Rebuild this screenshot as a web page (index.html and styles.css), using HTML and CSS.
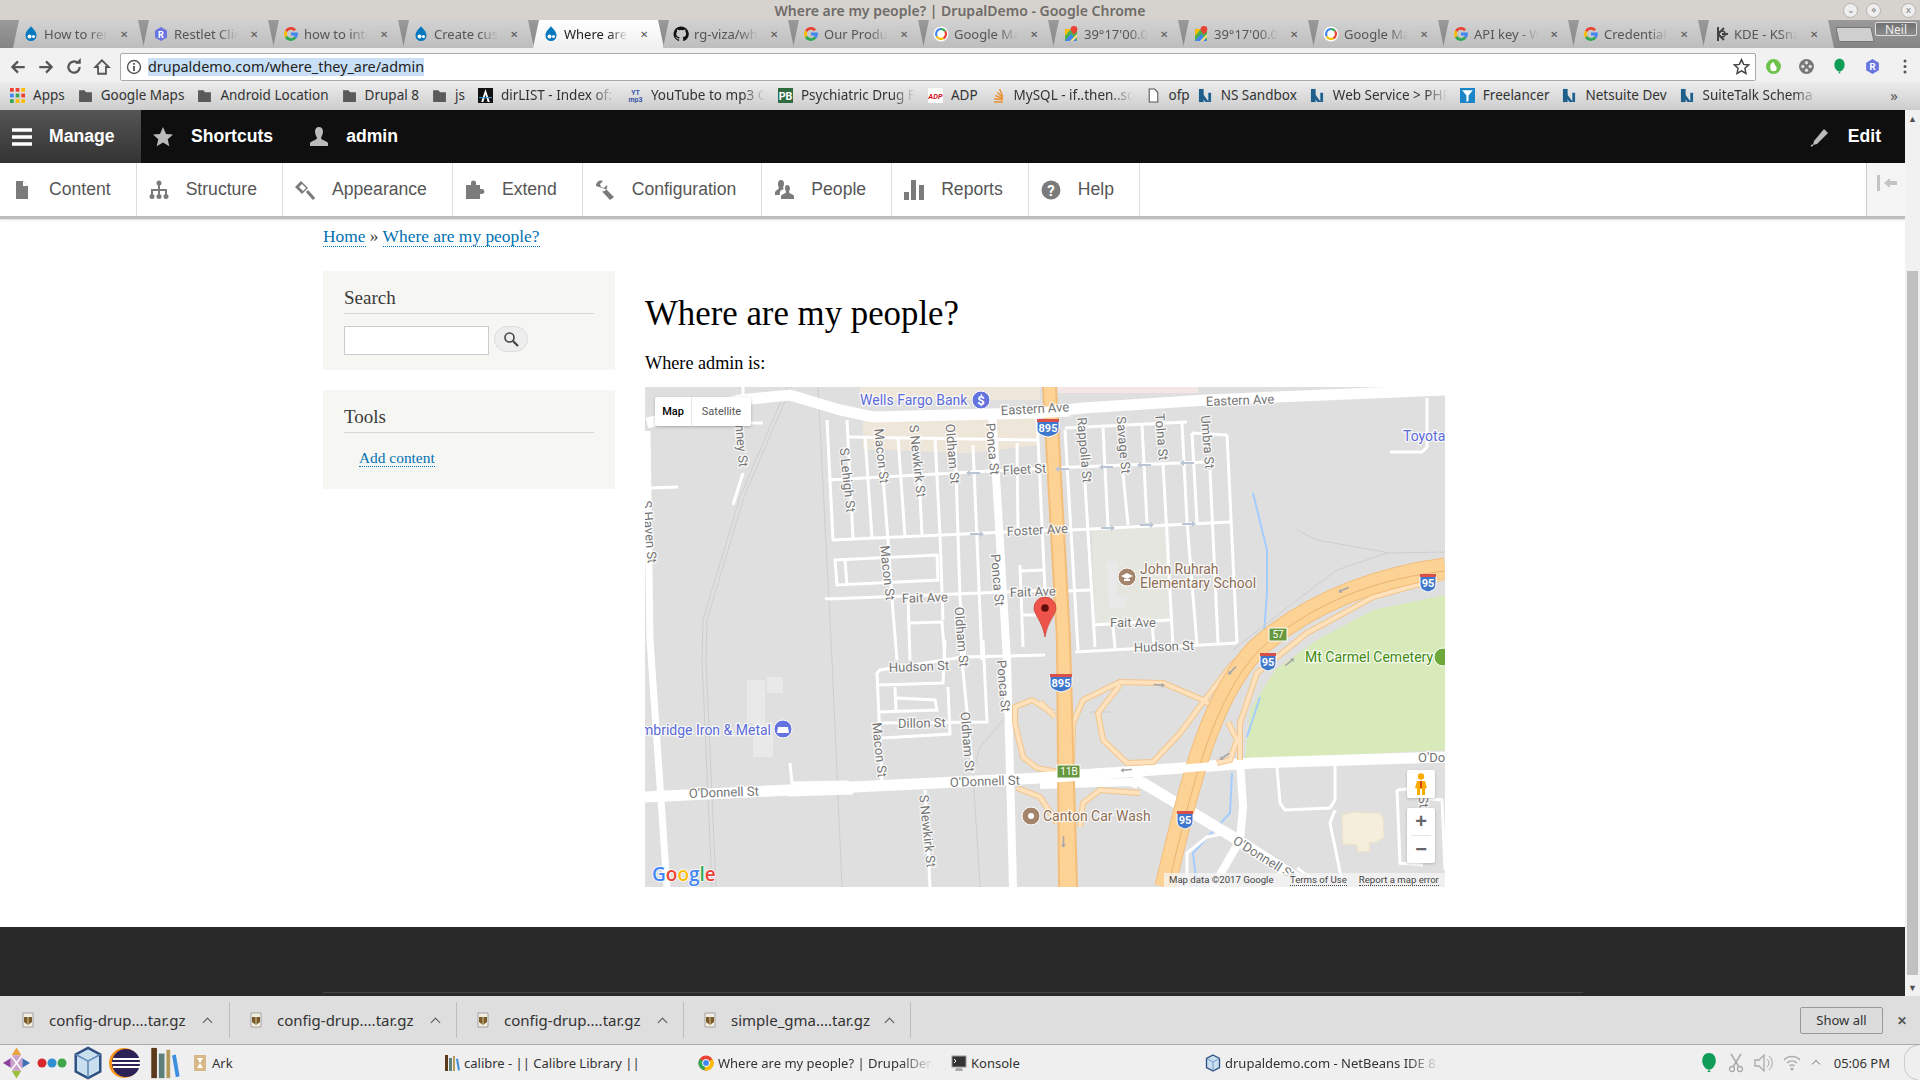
FILE: index.html
```html
<!DOCTYPE html>
<html lang="en">
<head>
    <meta charset="UTF-8">
    <title>Where are my people? | DrupalDemo</title>
    <link rel="stylesheet" href="styles.css">
</head>
<body>
<svg class="defs" width="0" height="0">
    <symbol id="i-drop" viewBox="0 0 16 16"><path d="M8 0c1 2.500 5.500 4.500 5.500 9.500a5.500 5.500 0 0 1-11 0C2.500 4.500 7 2.500 8 0z" fill="#0678be"/><circle cx="6.500" cy="10.500" r="2" fill="#fff"/><circle cx="10.500" cy="10.500" r="1.500" fill="#fff"/></symbol>
    <symbol id="i-r" viewBox="0 0 16 16"><path d="M8 1l6 3.500v7L8 15l-6-3.500v-7z" fill="#6a76e0"/><text x="8" y="11.500" class="ico-letter">R</text></symbol>
    <symbol id="i-g" viewBox="0 0 16 16"><g fill="none" stroke-width="2.800"><path d="M3.200 5.200A5.500 5.500 0 0 1 12 4.200" stroke="#ea4335"/><path d="M3.200 5.200a5.500 5.500 0 0 0 0 5.600" stroke="#fbbc05"/><path d="M3.200 10.800a5.500 5.500 0 0 0 9.100.6" stroke="#34a853"/><path d="M12.300 11.400A5.500 5.500 0 0 0 13.500 8H8" stroke="#4285f4"/></g></symbol>
    <symbol id="i-gh" viewBox="0 0 16 16"><path d="M8 .5a7.500 7.500 0 0 0-2.400 14.600c.4.100.5-.2.500-.4v-1.400c-2.100.5-2.500-.9-2.500-.9-.4-.9-.9-1.100-.9-1.100-.7-.5 0-.5 0-.5.800.1 1.200.8 1.200.8.700 1.200 1.800.8 2.300.6.100-.5.300-.8.500-1-1.700-.2-3.400-.8-3.400-3.700 0-.8.300-1.500.8-2-.1-.2-.3-1 .1-2 0 0 .6-.2 2.100.8a7 7 0 0 1 3.800 0c1.500-1 2.100-.8 2.100-.8.400 1 .2 1.800.1 2 .5.500.8 1.200.8 2 0 2.900-1.700 3.500-3.400 3.700.3.200.5.700.5 1.400v2.100c0 .2.100.5.500.4A7.500 7.500 0 0 0 8 .5z" fill="#111"/></symbol>
    <symbol id="i-gm" viewBox="0 0 16 16"><circle cx="8" cy="8" r="7.500" fill="#fff"/><path d="M8 3a5 5 0 0 0-4.300 7.500" fill="none" stroke="#4285f4" stroke-width="2.200"/><path d="M3.700 10.500A5 5 0 0 0 10.500 12.300" fill="none" stroke="#fbbc05" stroke-width="2.200"/><path d="M10.500 12.300A5 5 0 0 0 12 5" fill="none" stroke="#ea4335" stroke-width="2.200"/><path d="M12 5A5 5 0 0 0 8 3" fill="none" stroke="#34a853" stroke-width="2.200"/></symbol>
    <symbol id="i-maps" viewBox="0 0 16 16"><path d="M2 3h12v12H2z" fill="#4caf50"/><path d="M2 15L8 8l6 7z" fill="#4285f4"/><path d="M2 3h6L2 10z" fill="#fbbc05"/><path d="M7 15l7-7v3l-4 4z" fill="#ffe082"/><path d="M11 0a3.300 3.300 0 0 1 3.300 3.300C14.300 5.800 11 8.500 11 8.500S7.700 5.800 7.700 3.300A3.300 3.300 0 0 1 11 0z" fill="#ea4335"/></symbol>
    <symbol id="i-kde" viewBox="0 0 16 16"><path d="M5 1v14M5 8l6-6M5 8l6 6M9 8h6" stroke="#444" stroke-width="2" fill="none"/><circle cx="9" cy="8" r="3" fill="none" stroke="#444" stroke-width="1.500"/></symbol>
    <symbol id="i-folder" viewBox="0 0 14 14"><path d="M1 2h5l1.500 2H13v9H1z" fill="#5a5a5a"/></symbol>
    <symbol id="i-ns" viewBox="0 0 16 16"><path d="M1 1h5v14H1z" fill="#1e5f8c"/><path d="M10 1h5v14h-5z" fill="#dfe6ec"/><path d="M2 2l9 12V5h3v10H8L2 7z" fill="#1e5f8c"/></symbol>
    <symbol id="i-tgz" viewBox="0 0 16 16"><path d="M3 1h10v14H3z" fill="#f2ede2" stroke="#888" stroke-width=".700"/><path d="M4 5h8v5l-4 3-4-3z" fill="#7a5a2a"/><path d="M8 5v8" stroke="#d8c89a" stroke-width="1"/></symbol>
    <symbol id="i-balloon" viewBox="0 0 16 20"><path d="M8 1c3.800 0 6 3 6 7 0 4-3 8-6 8s-6-4-6-8c0-4 2.200-7 6-7z" fill="#0f9d58"/><path d="M8 16l-1.500 2h3z" fill="#0f9d58"/></symbol>
    <symbol id="i-cube" viewBox="0 0 16 18"><path d="M8 1l6.500 3.500v9L8 17l-6.500-3.500v-9z" fill="#c9dff0" stroke="#2c4f80" stroke-width="1.300"/><path d="M8 8l6.500-3.500M8 8v9M8 8L1.500 4.500" stroke="#5f88b5" stroke-width=".800" fill="none"/></symbol>
    <symbol id="i-books" viewBox="0 0 16 18"><path d="M1 1h3v16H1z" fill="#5a3a1a"/><path d="M5 4h3v13H5z" fill="#5f7f7a"/><path d="M9 2h2v15H9z" fill="#b49a5a"/><path d="M12 5l2-.500L16 16l-2 .500z" fill="#3f8fe0"/></symbol>
    <symbol id="i-arrow" viewBox="0 0 14 6"><path d="M0 3l4-3v2h10v2H4v2z"/></symbol>
</svg>

<div class="screen">
    <div class="titlebar">
        <span class="title-text">Where are my people? | DrupalDemo - Google Chrome</span>
        <div class="win-btns">
            <span class="win-btn">&#8964;</span>
            <span class="win-btn">&#8900;</span>
            <span class="win-btn win-close">x</span>
        </div>
    </div>

    <div class="tabstrip">
        <div class="tab"><svg class="fav"><use href="#i-drop"/></svg><span class="tab-title">How to rename</span><span class="tab-x">&#10005;</span></div>
        <div class="tab"><svg class="fav"><use href="#i-r"/></svg><span class="tab-title">Restlet Client</span><span class="tab-x">&#10005;</span></div>
        <div class="tab"><svg class="fav"><use href="#i-g"/></svg><span class="tab-title">how to integrate</span><span class="tab-x">&#10005;</span></div>
        <div class="tab"><svg class="fav"><use href="#i-drop"/></svg><span class="tab-title">Create custom</span><span class="tab-x">&#10005;</span></div>
        <div class="tab tab-active"><svg class="fav"><use href="#i-drop"/></svg><span class="tab-title">Where are my</span><span class="tab-x">&#10005;</span></div>
        <div class="tab"><svg class="fav"><use href="#i-gh"/></svg><span class="tab-title">rg-viza/where</span><span class="tab-x">&#10005;</span></div>
        <div class="tab"><svg class="fav"><use href="#i-g"/></svg><span class="tab-title">Our Products</span><span class="tab-x">&#10005;</span></div>
        <div class="tab"><svg class="fav"><use href="#i-gm"/></svg><span class="tab-title">Google Maps</span><span class="tab-x">&#10005;</span></div>
        <div class="tab"><svg class="fav"><use href="#i-maps"/></svg><span class="tab-title">39°17'00.0"N</span><span class="tab-x">&#10005;</span></div>
        <div class="tab"><svg class="fav"><use href="#i-maps"/></svg><span class="tab-title">39°17'00.0"N</span><span class="tab-x">&#10005;</span></div>
        <div class="tab"><svg class="fav"><use href="#i-gm"/></svg><span class="tab-title">Google Maps</span><span class="tab-x">&#10005;</span></div>
        <div class="tab"><svg class="fav"><use href="#i-g"/></svg><span class="tab-title">API key - Web</span><span class="tab-x">&#10005;</span></div>
        <div class="tab"><svg class="fav"><use href="#i-g"/></svg><span class="tab-title">Credentials</span><span class="tab-x">&#10005;</span></div>
        <div class="tab"><svg class="fav"><use href="#i-kde"/></svg><span class="tab-title">KDE - KSnap</span><span class="tab-x">&#10005;</span></div>
        <div class="newtab"></div>
        <div class="profile">Neil</div>
    </div>

    <div class="toolbar">
        <div class="nav-btns">
            <svg class="nav-ico" viewBox="0 0 16 16"><path d="M14 8H3M8 3L3 8l5 5" fill="none" stroke="#555" stroke-width="2"/></svg>
            <svg class="nav-ico" viewBox="0 0 16 16"><path d="M2 8h11M8 3l5 5-5 5" fill="none" stroke="#555" stroke-width="2"/></svg>
            <svg class="nav-ico" viewBox="0 0 16 16"><path d="M13 8a5 5 0 1 1-1.500-3.500" fill="none" stroke="#555" stroke-width="2"/><path d="M9 5h5V0z" fill="#555"/></svg>
            <svg class="nav-ico" viewBox="0 0 16 16"><path d="M8 2L2 8h2.500v6h7V8H14z" fill="none" stroke="#555" stroke-width="1.600"/></svg>
        </div>
        <div class="omnibox">
            <svg class="info-ico" viewBox="0 0 16 16"><circle cx="8" cy="8" r="6.500" fill="none" stroke="#555" stroke-width="1.400"/><path d="M8 7v5M8 4v1.800" stroke="#555" stroke-width="1.800"/></svg>
            <span class="url">drupaldemo.com/where_they_are/admin</span>
            <svg class="star-ico" viewBox="0 0 16 16"><path d="M8 1.500l2 4.500 4.800.5-3.600 3.200 1 4.800L8 12l-4.200 2.500 1-4.800L1.200 6.500 6 6z" fill="none" stroke="#444" stroke-width="1.400"/></svg>
        </div>
        <div class="ext-btns">
            <svg class="ext" viewBox="0 0 16 16"><circle cx="8" cy="8" r="7" fill="#6cc24a"/><path d="M8 3.500c-3 2-3.500 4-3 6a3 3 0 0 0 6 0c0-2-2-2.500-3-6z" fill="#fff"/></svg>
            <svg class="ext" viewBox="0 0 16 16"><circle cx="8" cy="8" r="7" fill="#777"/><circle cx="8" cy="4.500" r="1.600" fill="#ddd"/><circle cx="8" cy="11.500" r="1.600" fill="#ddd"/><circle cx="4.500" cy="8" r="1.600" fill="#ddd"/><circle cx="11.500" cy="8" r="1.600" fill="#ddd"/></svg>
            <svg class="ext" viewBox="0 0 16 20"><use href="#i-balloon"/></svg>
            <svg class="ext"><use href="#i-r"/></svg>
            <svg class="ext ext-dots" viewBox="0 0 4 16"><circle cx="2" cy="2.500" r="1.500" fill="#555"/><circle cx="2" cy="8" r="1.500" fill="#555"/><circle cx="2" cy="13.500" r="1.500" fill="#555"/></svg>
        </div>
    </div>

    <div class="bookmarks">
        <div class="bm"><svg class="bm-ico" viewBox="0 0 12 12"><rect x="0" y="0" width="3" height="3" fill="#ea4335"/><rect x="4.500" y="0" width="3" height="3" fill="#ea4335"/><rect x="9" y="0" width="3" height="3" fill="#fbbc05"/><rect x="0" y="4.500" width="3" height="3" fill="#4285f4"/><rect x="4.500" y="4.500" width="3" height="3" fill="#34a853"/><rect x="9" y="4.500" width="3" height="3" fill="#ea4335"/><rect x="0" y="9" width="3" height="3" fill="#34a853"/><rect x="4.500" y="9" width="3" height="3" fill="#fbbc05"/><rect x="9" y="9" width="3" height="3" fill="#fbbc05"/></svg><span>Apps</span></div>
        <div class="bm"><svg class="bm-ico"><use href="#i-folder"/></svg><span>Google Maps</span></div>
        <div class="bm"><svg class="bm-ico"><use href="#i-folder"/></svg><span>Android Location</span></div>
        <div class="bm"><svg class="bm-ico"><use href="#i-folder"/></svg><span>Drupal 8</span></div>
        <div class="bm"><svg class="bm-ico"><use href="#i-folder"/></svg><span>js</span></div>
        <div class="bm"><svg class="bm-ico" viewBox="0 0 14 14"><rect width="14" height="14" fill="#111"/><path d="M7 1l4 12H9L7 6l-2 7H3z" fill="#fff"/><path d="M1 9h12" stroke="#39c" stroke-width="1"/></svg><span class="bm-long">dirLIST - Index of: /</span></div>
        <div class="bm"><svg class="bm-ico" viewBox="0 0 14 14"><text x="7" y="6.500" class="yt-mark">YT</text><text x="7" y="13" class="yt-mark">mp3</text></svg><span class="bm-long">YouTube to mp3 Converter</span></div>
        <div class="bm"><svg class="bm-ico" viewBox="0 0 14 14"><rect width="14" height="14" fill="#2e6b3e"/><text x="7" y="11" class="pb-mark">PB</text></svg><span class="bm-long">Psychiatric Drug Facts</span></div>
        <div class="bm"><svg class="bm-ico" viewBox="0 0 14 14"><rect width="14" height="14" fill="#fff"/><text x="7" y="10" class="adp-mark">ADP</text></svg><span>ADP</span></div>
        <div class="bm"><svg class="bm-ico" viewBox="0 0 14 14"><path d="M3 13h8M3 10l8 1M4 7l7 3M6 4l5 5M8 1l3 7" stroke="#e8912d" stroke-width="1.300" fill="none"/></svg><span class="bm-long bm-wide">MySQL - if..then..sql</span></div>
        <div class="bm bm-tight"><svg class="bm-ico" viewBox="0 0 14 14"><path d="M3 1h5l3 3v9H3z" fill="#fff" stroke="#555"/></svg><span>ofp</span></div>
        <div class="bm"><svg class="bm-ico"><use href="#i-ns"/></svg><span>NS Sandbox</span></div>
        <div class="bm"><svg class="bm-ico"><use href="#i-ns"/></svg><span class="bm-long">Web Service &gt; PHP</span></div>
        <div class="bm"><svg class="bm-ico" viewBox="0 0 14 14"><rect width="14" height="14" fill="#1a86c8"/><path d="M2 2h10L8 7v5L6 13V7z" fill="#fff"/></svg><span>Freelancer</span></div>
        <div class="bm"><svg class="bm-ico"><use href="#i-ns"/></svg><span>Netsuite Dev</span></div>
        <div class="bm"><svg class="bm-ico"><use href="#i-ns"/></svg><span class="bm-long">SuiteTalk Schema Browser</span></div>
        <div class="bm-more">&raquo;</div>
    </div>

    <div class="viewport">
        <div class="page">
            <div class="adminbar">
                <div class="admin-item admin-manage">
                    <svg class="admin-ico" viewBox="0 0 20 20"><path d="M0 3h20M0 10h20M0 17h20" stroke="#fff" stroke-width="3.400" stroke-linecap="round"/></svg>
                    <span>Manage</span>
                </div>
                <div class="admin-item admin-shortcuts">
                    <svg class="admin-ico" viewBox="0 0 20 20"><path d="M10 0l3 7 7 .600-5.300 4.700 1.600 7L10 15.500 3.700 19.300l1.600-7L0 7.600 7 7z" fill="#bbb"/></svg>
                    <span>Shortcuts</span>
                </div>
                <div class="admin-item admin-user">
                    <svg class="admin-ico" viewBox="0 0 20 20"><path d="M10 0c2.500 0 4 2 4 4.500 0 3-1.500 5-2 6.500 0 2 6 3 7 5v3H1v-3c1-2 7-3 7-5-.500-1.500-2-3.500-2-6.500C6 2 7.500 0 10 0z" fill="#bbb"/></svg>
                    <span>admin</span>
                </div>
                <div class="admin-item admin-edit">
                    <svg class="admin-ico" viewBox="0 0 20 20"><path d="M14 2l4 4L7 17l-4 1 1-4z" fill="#bbb"/><path d="M1 19l2-1" stroke="#bbb" stroke-width="1.500"/></svg>
                    <span>Edit</span>
                </div>
            </div>

            <nav class="adminnav">
                <div class="nav-item"><svg class="nav-item-ico" viewBox="0 0 20 20"><path d="M4 1h7l5 5v13H4z" fill="#7b7b7b"/><path d="M11 1v5h5" fill="#fff"/></svg>Content</div>
                <div class="nav-item"><svg class="nav-item-ico" viewBox="0 0 20 20"><circle cx="10" cy="3" r="2.500" fill="#7b7b7b"/><circle cx="3" cy="16.500" r="2.500" fill="#7b7b7b"/><circle cx="10" cy="16.500" r="2.500" fill="#7b7b7b"/><circle cx="17" cy="16.500" r="2.500" fill="#7b7b7b"/><path d="M10 3v13M3 16v-6h14v6" fill="none" stroke="#7b7b7b" stroke-width="2"/></svg>Structure</div>
                <div class="nav-item"><svg class="nav-item-ico" viewBox="0 0 20 20"><path d="M0 7l6-6 7 7-6 6z" fill="#7b7b7b"/><path d="M4 7l3-3 4 4-3 3z" fill="#fff"/><path d="M12 11l7 8" stroke="#7b7b7b" stroke-width="3"/></svg>Appearance</div>
                <div class="nav-item"><svg class="nav-item-ico" viewBox="0 0 20 20"><path d="M1 5h5V3a2.500 2.500 0 0 1 5 0v2h4v4h2a2.500 2.500 0 0 1 0 5h-2v5H1z" fill="#7b7b7b"/></svg>Extend</div>
                <div class="nav-item"><svg class="nav-item-ico" viewBox="0 0 20 20"><path d="M1 6a5 5 0 0 1 7-5L5 4l1 3 3 1 3-3a5 5 0 0 1-5 6.500L15 20l4-3-7.500-7.500" fill="#7b7b7b"/></svg>Configuration</div>
                <div class="nav-item"><svg class="nav-item-ico" viewBox="0 0 20 20"><path d="M7 0c2 0 3 1.500 3 3.500S9 7 9 8l1 1c-2 1-5 1-4 6H1v-3c.500-1.500 3.500-2.500 4-4C4.500 7 4 5.500 4 3.500 4 1.500 5 0 7 0z" fill="#7b7b7b"/><path d="M13 5c2 0 3 1.500 3 3s-1 3-1 4.500c.500 1 4 1.500 5 3.500v3H7v-3c1-2 4.500-2.500 5-3.500C12 11 11 10 11 8s1-3 2-3z" fill="#7b7b7b"/></svg>People</div>
                <div class="nav-item"><svg class="nav-item-ico" viewBox="0 0 20 20"><path d="M0 12h5v8H0zM7 0h5v20H7zM15 5h5v15h-5z" fill="#7b7b7b"/></svg>Reports</div>
                <div class="nav-item nav-last"><svg class="nav-item-ico" viewBox="0 0 20 20"><circle cx="10" cy="10" r="9.500" fill="#7b7b7b"/><text x="10" y="15.500" class="help-mark">?</text></svg>Help</div>
                <div class="nav-toggle"><svg class="toggle-ico" viewBox="0 0 20 16"><path d="M0 0h3v16H0z" fill="#c4c4c4"/><path d="M7 8l6-5v3h7v4h-7v3z" fill="#c4c4c4"/></svg></div>
            </nav>

            <div class="site">
                <div class="breadcrumb"><a href="#">Home</a> » <a href="#">Where are my people?</a></div>
                <div class="columns">
                    <aside class="sidebar">
                        <section class="block">
                            <h2 class="block-title">Search</h2>
                            <div class="search-row">
                                <input class="search-input" type="text">
                                <div class="search-btn"><svg viewBox="0 0 16 16" width="16" height="16"><circle cx="6.500" cy="6.500" r="4.500" fill="none" stroke="#444" stroke-width="1.600"/><path d="M10 10l5 5" stroke="#444" stroke-width="2.200"/></svg></div>
                            </div>
                        </section>
                        <section class="block">
                            <h2 class="block-title">Tools</h2>
                            <div class="block-link"><a href="#">Add content</a></div>
                        </section>
                    </aside>
                    <main class="content">
                        <h1 class="page-title">Where are my people?</h1>
                        <p class="where">Where admin is:</p>
                        <div class="map">
                            <svg class="map-svg" viewBox="645 387 800 500" width="800" height="500">
                                <defs>
                                    <path id="ramp-lines" d="M1083 700l37-18 43 1 40 17 12 8M1120 685l-22 28 5 27 24 23 26-1 27-29 27-36 23-30 27-27M1083 700l-10 23-1 40M1228 722l9 18-7 20-13 3M1080 827l3-24 17-13 40 3M1015 723v-16l17-7 21 13M1015 723l8 34 14 11 20 4M1017 788l23 9 17 26M1040 702l15 15M1445 577l-72 20-66 36-50 40-17 50v37"/>
                                </defs>
                                <!-- areas -->
                                <path class="commercial" d="M860 387h180v13H860zM863 420l175-8 1 33-70 8-106-4z"/>
                                <path class="pink" d="M1058 387h140v6h-140z"/>
                                <path class="school" d="M1092 530l78-7v97l-75 5z"/>
                                <path class="bldg" d="M1107 562h10v35h9v11l-17 1z"/>
                                <path class="bldg" d="M747 680h18v43h-18zM767 677h16v16h-16zM753 723h20v34h-20z"/>
                                <path class="park" d="M1445 595l-72 15-56 30-42 30-25 40-5 50 200-10z"/>
                                <path class="plant" d="M1342 815l12-3 12 1 14 0 3 6 1 18-8 5-7 1 1 8-12 1-1-7-14-1z"/>

                                <!-- water -->
                                <path class="water" d="M1253 493l14 57v43l-3 40M1260 697l-13 40M1232 773l-2 40-37 40 4 34"/>

                                <!-- rail -->
                                <path class="rail" d="M787 387L740 497 703 620 702 660 712 887M791 387L744 497 707 620 706 660 716 887M818 387l14 273 10 227M1297 530l20 10 73 13 55-1M1387 553l-50 17-57 43-47 37M1110 712l-20 0M1010 712l-30 35-7 26 7 114"/>

                                <!-- small streets -->
                                <g class="street">
                                    <path d="M827 420l6 120M847 420l6 118M865 437l7 100M880 440l8 100 4 60 5 60M898 437l7 100M917 437l5 98M935 438l5 97 3 85M955 440l5 157 5 63M973 445l9 215M1017 443l1 90M1037 417l8 173"/>
                                    <path d="M847 437l190 3M828 480l219-12 160-6M832 540l218-10 20 0 160-8M825 598l3 1 229-9M835 560l102-5 1 25-101 5zM845 560l2 25"/>
                                    <path d="M910 623l32-1 3 38M908 600l2 60M1020 565l3 82M1020 571l23-1M1045 655l-82 2-83 13-3 3 5 110M1023 615l15 0"/>
                                    <path d="M1065 430l13 220M1085 483l10 164M1103 428l5 99M1123 473l5 52M1142 425l5 98M1163 463l10 184M1182 423l5 99 10 123M1192 433l5 89M1210 470l8 173M1227 435l10 208"/>
                                    <path d="M1065 428l122-6M1192 433l35 2M1093 625l77-5M1040 592l50-2M1075 652l162-9M1113 626l2 22M1152 623l2 22"/>
                                    <path d="M878 685l65-2 2-43M878 712l59-2-2-10-38-2M895 687l1 23M880 723l107-1-4-82M882 738l68-4-2-47M960 640l13 133"/>
                                    <path d="M790 763l2 20 55-1 10 3M788 795l65-2M925 790l5 97"/>
                                    <path d="M1277 767l3 36 5 7 45-2 5-8v-35M1335 810l-5 13 5 24 8 40M1397 790l3 73 23 2M1397 790l10-1M1420 798l22 2 3 70M1187 887v-34l20-16 20-4M1297 868l17 12"/>
                                    <path d="M743 473l-10 32M650 488l28-1M698 423l65 0M743 387v12M1427 398v49l-5 5h-32"/>
                                </g>
                                <!-- main roads -->
                                <g class="road">
                                    <path d="M647 431l3 209 17 247"/>
                                    <path class="road-m" d="M992 410l15 250 6 227"/>
                                    <path class="road-l" d="M647 423l93-23 50-5 50 15 33 7 160-4 50-5 124-8 238-10"/>
                                    <path class="road-l" d="M645 797l395-19 213-15 192-6"/>
                                    <path class="road-l" d="M1133 777l100 60 67 43"/>
                                    <path class="road-m" d="M1240 760l3 47-3 33-27 47"/>
                                    <path class="road-m" d="M1040 785l90-3 8 3"/>
                                </g>
                                <!-- highways -->
                                <use href="#ramp-lines" class="ramp-edge"/>
                                <use href="#ramp-lines" class="ramp"/>
                                <path class="hwy-edge" d="M1042 387h15l14 253 7 247h-20l-2-247z"/>
                                <path class="hwy" d="M1044 387h11l14 253 7 247h-16l-2-247z"/>
                                <path class="hwy-curve-edge" d="M1445 568c-85 12-145 42-190 82-45 50-65 130-90 237"/>
                                <path class="hwy-curve" d="M1445 568c-85 12-145 42-190 82-45 50-65 130-90 237"/>
                                <path class="hwy-split" d="M1445 571c-85 10-142 40-187 80-45 50-65 130-90 236"/>
                                <path class="road-over" d="M1030 413l40-2M1040 778l70-5"/>
                                <path class="road-over road-over-thin" d="M1178 769l36-3"/>

                                <!-- arrows -->
                                <g class="arr">
                                    <use href="#i-arrow" x="966" y="470" width="14" height="6"/>
                                    <use href="#i-arrow" x="1055" y="466" width="14" height="6"/>
                                    <use href="#i-arrow" x="1099" y="464" width="14" height="6"/>
                                    <use href="#i-arrow" x="1137" y="462" width="14" height="6"/>
                                    <use href="#i-arrow" x="1180" y="460" width="14" height="6"/>
                                    <use href="#i-arrow" width="14" height="6" transform="translate(984 537) rotate(180)"/>
                                    <use href="#i-arrow" width="14" height="6" transform="translate(1115 531) rotate(180)"/>
                                    <use href="#i-arrow" width="14" height="6" transform="translate(1154 528) rotate(180)"/>
                                    <use href="#i-arrow" width="14" height="6" transform="translate(1196 527) rotate(180)"/>
                                </g>
                                <g class="arr-dark">
                                    <use href="#i-arrow" width="12" height="5" transform="translate(1337 590) rotate(-25)"/>
                                    <use href="#i-arrow" width="12" height="5" transform="translate(1296 660) rotate(140)"/>
                                    <use href="#i-arrow" width="12" height="5" transform="translate(1226 673) rotate(-45)"/>
                                    <use href="#i-arrow" width="12" height="5" transform="translate(1165 688) rotate(185)"/>
                                    <use href="#i-arrow" width="12" height="5" transform="translate(1120 768) rotate(-5)"/>
                                    <use href="#i-arrow" width="12" height="5" transform="translate(1218 758) rotate(-35)"/>
                                    <use href="#i-arrow" width="12" height="5" transform="translate(1061 848) rotate(-90)"/>
                                </g>

                                <!-- street labels -->
                                <g class="lbl">
                                    <text x="1001" y="415" transform="rotate(-3 1001 415)">Eastern Ave</text>
                                    <text x="1206" y="406" transform="rotate(-2 1206 406)">Eastern Ave</text>
                                    <text x="1003" y="475" transform="rotate(-3 1003 475)">Fleet St</text>
                                    <text x="1007" y="536" transform="rotate(-3 1007 536)">Foster Ave</text>
                                    <text x="902" y="603" transform="rotate(-2 902 603)">Fait Ave</text>
                                    <text x="1010" y="597" transform="rotate(-2 1010 597)">Fait Ave</text>
                                    <text x="1110" y="627" >Fait Ave</text>
                                    <text x="889" y="672" transform="rotate(-2 889 672)">Hudson St</text>
                                    <text x="1134" y="652" transform="rotate(-2 1134 652)">Hudson St</text>
                                    <text x="898" y="728" transform="rotate(-1 898 728)">Dillon St</text>
                                    <text x="689" y="798" transform="rotate(-2 689 798)">O'Donnell St</text>
                                    <text x="950" y="787" transform="rotate(-2 950 787)">O'Donnell St</text>
                                    <text x="1418" y="762">O'Donnell St</text>
                                    <text x="1232" y="843" transform="rotate(32 1232 843)">O'Donnell St</text>
                                    <text x="847" y="484" class="mid" transform="rotate(84 847 480)">S Lehigh St</text>
                                    <text x="881" y="460" class="mid" transform="rotate(84 881 456)">Macon St</text>
                                    <text x="887" y="577" class="mid" transform="rotate(84 887 573)">Macon St</text>
                                    <text x="879" y="754" class="mid" transform="rotate(84 879 750)">Macon St</text>
                                    <text x="917" y="465" class="mid" transform="rotate(84 917 461)">S Newkirk St</text>
                                    <text x="927" y="835" class="mid" transform="rotate(84 927 831)">S Newkirk St</text>
                                    <text x="952" y="458" class="mid" transform="rotate(85 952 454)">Oldham St</text>
                                    <text x="961" y="641" class="mid" transform="rotate(85 961 637)">Oldham St</text>
                                    <text x="967" y="746" class="mid" transform="rotate(85 967 742)">Oldham St</text>
                                    <text x="992" y="453" class="mid" transform="rotate(85 992 449)">Ponca St</text>
                                    <text x="997" y="584" class="mid" transform="rotate(85 997 580)">Ponca St</text>
                                    <text x="1003" y="690" class="mid" transform="rotate(85 1003 686)">Ponca St</text>
                                    <text x="1084" y="454" class="mid" transform="rotate(85 1084 450)">Rappolla St</text>
                                    <text x="1123" y="449" class="mid" transform="rotate(85 1123 445)">Savage St</text>
                                    <text x="1161" y="441" class="mid" transform="rotate(85 1161 437)">Tolna St</text>
                                    <text x="1207" y="446" class="mid" transform="rotate(85 1207 442)">Umbra St</text>
                                    <text x="649" y="536" class="mid" transform="rotate(85 649 532)">S Haven St</text>
                                    <text x="743" y="471" class="end" transform="rotate(85 743 467)">Kenney St</text>
                                    <text x="1423" y="806" class="mid" transform="rotate(85 1423 802)">St</text>
                                </g>

                                <!-- shields -->
                                <g class="shield" transform="translate(1048 428)"><path class="sh-blue" d="M-11-7h22v8c0 5-6 7-11 8-5-1-11-3-11-8z"/><path class="sh-red" d="M-11-9h22v3h-22z"/><text y="4">895</text></g>
                                <g class="shield" transform="translate(1061 683)"><path class="sh-blue" d="M-11-7h22v8c0 5-6 7-11 8-5-1-11-3-11-8z"/><path class="sh-red" d="M-11-9h22v3h-22z"/><text y="4">895</text></g>
                                <g class="shield" transform="translate(1428 583)"><path class="sh-blue" d="M-8-7h16v8c0 5-4 7-8 8-4-1-8-3-8-8z"/><path class="sh-red" d="M-8-9h16v3h-16z"/><text y="4">95</text></g>
                                <g class="shield" transform="translate(1268 662)"><path class="sh-blue" d="M-8-7h16v8c0 5-4 7-8 8-4-1-8-3-8-8z"/><path class="sh-red" d="M-8-9h16v3h-16z"/><text y="4">95</text></g>
                                <g class="shield" transform="translate(1185 820)"><path class="sh-blue" d="M-8-7h16v8c0 5-4 7-8 8-4-1-8-3-8-8z"/><path class="sh-red" d="M-8-9h16v3h-16z"/><text y="4">95</text></g>
                                <g class="exit" transform="translate(1278 635)"><rect x="-9" y="-7" width="18" height="13"/><text y="3">57</text></g>
                                <g class="exit" transform="translate(1069 772)"><rect x="-12" y="-7" width="23" height="13"/><text y="3">11B</text></g>

                                <!-- places -->
                                <text x="860" y="405" class="poi poi-blue">Wells Fargo Bank</text>
                                <circle cx="981" cy="400" r="9" class="pin-blue"/>
                                <text x="981" y="405" class="pin-glyph">$</text>
                                <text x="1403" y="441" class="poi poi-blue">Toyota</text>
                                <text x="1140" y="574" class="poi poi-brown">John Ruhrah</text>
                                <text x="1140" y="588" class="poi poi-brown">Elementary School</text>
                                <circle cx="1127" cy="577" r="9" class="pin-brown"/>
                                <path class="pin-white" d="M1121 576l6-3 6 3-6 3zM1124 579h6v2h-6z"/>
                                <text x="1305" y="662" class="poi poi-green">Mt Carmel Cemetery</text>
                                <circle cx="1443" cy="657" r="9" class="pin-green"/>
                                <text x="1043" y="821" class="poi poi-brown">Canton Car Wash</text>
                                <circle cx="1031" cy="816" r="9" class="pin-brown"/>
                                <circle cx="1031" cy="816" r="3" fill="#fff"/>
                                <text x="771" y="735" class="poi poi-blue poi-end">Cambridge Iron &amp; Metal</text>
                                <circle cx="783" cy="729" r="9" class="pin-blue"/>
                                <path class="pin-white" d="M778 727h10l1 6h-12z"/>

                                <!-- marker -->
                                <path class="marker" d="M1045 597a11 11 0 0 1 11 11c0 7-8 12-11 29-3-17-11-22-11-29a11 11 0 0 1 11-11z"/>
                                <circle cx="1045" cy="608" r="3.800" fill="#5f0e0a"/>

                                <text x="652" y="881" class="logo"><tspan fill="#4285f4">G</tspan><tspan fill="#ea4335">o</tspan><tspan fill="#fbbc05">o</tspan><tspan fill="#4285f4">g</tspan><tspan fill="#34a853">l</tspan><tspan fill="#ea4335">e</tspan></text>
                            </svg>

                            <div class="map-type">
                                <span class="map-type-on">Map</span>
                                <span class="map-type-off">Satellite</span>
                            </div>
                            <div class="pegman">
                                <svg viewBox="0 0 12 22" width="12" height="22"><circle cx="6" cy="3.500" r="3.200" fill="#f9ab00"/><path d="M2 8h8l2 7-2 .500V22H7v-6H5v6H2v-6.500L0 15z" fill="#f9ab00"/><path d="M6 8v7" stroke="#c5221f" stroke-width="1.400"/></svg>
                            </div>
                            <div class="zoom-ctl">
                                <div class="zoom-btn">+</div>
                                <div class="zoom-sep"></div>
                                <div class="zoom-btn">&minus;</div>
                            </div>
                            <div class="attrib">
                                <span>Map data ©2017 Google</span>
                                <a href="#">Terms of Use</a>
                                <a href="#">Report a map error</a>
                            </div>
                        </div>
                    </main>
                </div>
                <footer class="footer"><div class="footer-line"></div></footer>
            </div>
        </div>
        <div class="scrollbar">
            <span class="sb-arrow">&#9650;</span>
            <div class="sb-track"><div class="sb-thumb"></div></div>
            <span class="sb-arrow">&#9660;</span>
        </div>
    </div>

    <div class="downloads">
        <div class="dl"><svg class="dl-ico"><use href="#i-tgz"/></svg><span class="dl-name">config-drup....tar.gz</span><span class="dl-caret"></span></div>
        <div class="dl"><svg class="dl-ico"><use href="#i-tgz"/></svg><span class="dl-name">config-drup....tar.gz</span><span class="dl-caret"></span></div>
        <div class="dl"><svg class="dl-ico"><use href="#i-tgz"/></svg><span class="dl-name">config-drup....tar.gz</span><span class="dl-caret"></span></div>
        <div class="dl"><svg class="dl-ico"><use href="#i-tgz"/></svg><span class="dl-name">simple_gma....tar.gz</span><span class="dl-caret"></span></div>
        <div class="dl-right">
            <div class="show-all">Show all</div>
            <div class="dl-close">&#10005;</div>
        </div>
    </div>

    <div class="taskbar">
        <div class="launchers">
            <svg class="launch launch-start" viewBox="0 0 28 32"><path d="M14 0l5 8h-10z" fill="#e8a33d"/><path d="M14 32l-5-8h10z" fill="#9cbf3c"/><path d="M0 16l8-5v10z" fill="#8b3f9e"/><path d="M28 16l-8 5V11z" fill="#3f6fb5"/><path d="M8 8h12v16H8z" fill="#c9a0c9"/><path d="M8 8l12 16M20 8L8 24" stroke="#fff" stroke-width="1.500"/></svg>
            <svg class="launch launch-dots" viewBox="0 0 30 12"><circle cx="5" cy="6" r="4.500" fill="#d9272e"/><circle cx="15" cy="6" r="4.500" fill="#2f8fd0"/><circle cx="25" cy="6" r="4.500" fill="#3fa64a"/></svg>
            <svg class="launch launch-cube"><use href="#i-cube"/></svg>
            <svg class="launch launch-eclipse" viewBox="0 0 32 32"><circle cx="16" cy="16" r="15" fill="#f7941e"/><circle cx="18" cy="16" r="14" fill="#2c2255"/><path d="M5 12h27M4 16h28M5 20h27" stroke="#fff" stroke-width="1.800"/></svg>
            <svg class="launch launch-books"><use href="#i-books"/></svg>
        </div>
        <div class="task task-ark"><svg class="task-ico" viewBox="0 0 16 18"><path d="M2 1h12v16H2z" fill="#d8b888"/><path d="M5 4h6L8 9l3 5H5l3-5z" fill="#fff"/></svg><span>Ark</span></div>
        <div class="task task-calibre"><svg class="task-ico"><use href="#i-books"/></svg><span>calibre - || Calibre Library ||</span></div>
        <div class="task task-chrome"><svg class="task-ico" viewBox="0 0 16 16"><circle cx="8" cy="8" r="7.500" fill="#ea4335"/><path d="M8 8L1.500 4a7.500 7.500 0 0 0 5 11.300z" fill="#34a853"/><path d="M8 8l6.500-4a7.500 7.500 0 0 1-8 11.300z" fill="#fbbc05"/><circle cx="8" cy="8" r="3.500" fill="#4285f4" stroke="#fff"/></svg><span class="task-fade">Where are my people? | DrupalDemo</span></div>
        <div class="task task-konsole"><svg class="task-ico" viewBox="0 0 16 18"><rect x="1" y="2" width="14" height="11" fill="#333" stroke="#999"/><path d="M3 5l2 2-2 2" stroke="#fff" fill="none"/><path d="M5 14h6l1 3H4z" fill="#aaa"/></svg><span>Konsole</span></div>
        <div class="task task-nb"><svg class="task-ico"><use href="#i-cube"/></svg><span class="task-fade">drupaldemo.com - NetBeans IDE 8.2</span></div>
        <div class="tray">
            <svg class="tray-ico tray-balloon"><use href="#i-balloon"/></svg>
            <svg class="tray-ico" viewBox="0 0 16 20"><path d="M3 1l8 13M13 1L5 14" stroke="#aaa" stroke-width="1.500"/><circle cx="4" cy="16" r="2.500" fill="none" stroke="#aaa" stroke-width="1.300"/><circle cx="12" cy="16" r="2.500" fill="none" stroke="#aaa" stroke-width="1.300"/></svg>
            <svg class="tray-ico" viewBox="0 0 20 20"><path d="M1 7h4l5-5v16l-5-5H1z" fill="none" stroke="#aaa" stroke-width="1.300"/><path d="M13 6a5 5 0 0 1 0 8M15 3a9 9 0 0 1 0 14" fill="none" stroke="#aaa"/></svg>
            <svg class="tray-ico" viewBox="0 0 20 20"><path d="M2 7a11 11 0 0 1 16 0M5 10a7 7 0 0 1 10 0M7.500 13a3.500 3.500 0 0 1 5 0" fill="none" stroke="#aaa" stroke-width="1.400"/><circle cx="10" cy="16" r="1.500" fill="#aaa"/></svg>
            <span class="tray-up"></span>
            <span class="clock">05:06 PM</span>
            <span class="tray-corner"></span>
        </div>
    </div>
</div>
</body>
</html>
```

FILE: styles.css
```css
* {
    box-sizing: border-box;
}
body {
    margin: 0;
    font-family: "Noto Sans", sans-serif;
    background: #fff;
    overflow: hidden;
}
.defs {
    position: absolute;
}
.screen {
    width: 1920px;
    height: 1080px;
    display: flex;
    flex-direction: column;
    overflow: hidden;
}
svg text {
    font-family: Roboto, sans-serif;
}
.ico-letter {
    font-size: 9px;
    font-weight: 700;
    fill: #fff;
    text-anchor: middle;
}

/* window title */
.titlebar {
    height: 20px;
    flex: none;
    background: #d6d2ce;
    display: flex;
    align-items: center;
    justify-content: center;
    position: relative;
}
.title-text {
    font-size: 14px;
    font-weight: 600;
    color: #6f6b68;
}
.win-btns {
    position: absolute;
    right: 0;
    top: 0;
    height: 20px;
    width: 85px;
    display: flex;
    align-items: center;
}
.win-btn {
    width: 15px;
    height: 15px;
    margin-left: 8px;
    border-radius: 50%;
    background: #eeeeee;
    border: 1px solid #b5b2ae;
    color: #777;
    font-size: 9px;
    line-height: 12px;
    text-align: center;
}
.win-close {
    margin-left: 20px;
}

/* tabs */
.tabstrip {
    height: 28px;
    flex: none;
    background: linear-gradient(#9a9a9a, #858585);
    display: flex;
    padding-left: 13px;
    position: relative;
}
.tab {
    width: 131px;
    margin-right: -1px;
    height: 28px;
    flex: none;
    background: linear-gradient(#d2d2d2, #bdbdbd);
    clip-path: polygon(0 100%, 6px 0, calc(100% - 6px) 0, 100% 100%);
    display: flex;
    align-items: center;
    padding-left: 10px;
    font-size: 13px;
    color: #555;
}
.tab-active {
    background: linear-gradient(#ffffff, #f0f0f0);
    color: #222;
}
.fav {
    width: 16px;
    height: 16px;
    flex: none;
    margin-right: 5px;
}
.tab-title {
    width: 64px;
    flex: none;
    white-space: nowrap;
    overflow: hidden;
    -webkit-mask-image: linear-gradient(90deg, #000 70%, transparent);
    mask-image: linear-gradient(90deg, #000 70%, transparent);
}
.tab-x {
    margin-left: 12px;
    font-size: 10px;
    color: #555;
}
.newtab {
    width: 36px;
    height: 15px;
    margin: 7px 0 0 4px;
    flex: none;
    background: #cfcfcf;
    border: 1px solid #777;
    transform: skewX(12deg);
    border-radius: 2px;
}
.profile {
    position: absolute;
    right: 3px;
    top: 2px;
    width: 42px;
    height: 14px;
    background: linear-gradient(#707070, #8d8d8d);
    color: #eee;
    font-size: 12px;
    line-height: 13px;
    text-align: center;
    border: 1px solid #ddd;
    border-radius: 2px;
}

/* toolbar */
.toolbar {
    height: 34px;
    flex: none;
    background: #f1f1f1;
    display: flex;
    align-items: center;
    padding-top: 3px;
}
.nav-btns {
    width: 120px;
    flex: none;
    display: flex;
    padding-left: 9px;
    gap: 10px;
}
.nav-ico {
    width: 18px;
    height: 18px;
}
.omnibox {
    width: 1636px;
    height: 28px;
    flex: none;
    background: #fff;
    border: 1px solid #aaa;
    border-radius: 2px;
    display: flex;
    align-items: center;
    padding-left: 5px;
}
.info-ico {
    width: 16px;
    height: 16px;
    margin-right: 6px;
}
.url {
    font-size: 14.400px;
    line-height: 18px;
    background: #c8dff6;
    color: #222;
}
.star-ico {
    width: 17px;
    height: 17px;
    margin-left: auto;
    margin-right: 5px;
}
.ext-btns {
    flex: 1;
    display: flex;
    align-items: center;
    padding-left: 9px;
    gap: 16px;
}
.ext {
    width: 17px;
    height: 17px;
    flex: none;
}
.ext-dots {
    width: 4px;
    margin-left: 6px;
}

/* bookmarks */
.bookmarks {
    height: 28px;
    flex: none;
    background: linear-gradient(#ececec, #cdcdcd);
    display: flex;
    align-items: center;
    padding: 0 0 2px 10px;
    gap: 13px;
    font-size: 13.500px;
    color: #333;
    position: relative;
}
.bm {
    display: flex;
    align-items: center;
    flex: none;
    white-space: nowrap;
}
.bm-tight {
    margin-right: -5px;
}
.bm-ico {
    width: 15px;
    height: 15px;
    margin-right: 8px;
    flex: none;
}
.bm-long {
    display: block;
    width: 114px;
    overflow: hidden;
    -webkit-mask-image: linear-gradient(90deg, #000 80%, transparent);
    mask-image: linear-gradient(90deg, #000 80%, transparent);
}
.bm-wide {
    width: 119px;
}
.bm-more {
    position: absolute;
    right: 22px;
    top: 3px;
    font-size: 15px;
    color: #555;
}
.yt-mark {
    font-size: 6.500px;
    font-weight: 700;
    fill: #3a55a8;
    text-anchor: middle;
}
.pb-mark {
    font-size: 10px;
    font-weight: 700;
    fill: #fff;
    text-anchor: middle;
}
.adp-mark {
    font-size: 7px;
    font-weight: 700;
    font-style: italic;
    fill: #d8141c;
    text-anchor: middle;
}

/* page viewport */
.viewport {
    flex: 1;
    min-height: 0;
    display: flex;
    overflow: hidden;
}
.page {
    width: 1905px;
    flex: none;
    display: flex;
    flex-direction: column;
}
.scrollbar {
    flex: 1;
    background: #f1f1f1;
    display: flex;
    flex-direction: column;
    align-items: center;
    font-size: 9px;
    color: #505050;
}
.sb-arrow {
    height: 17px;
    line-height: 17px;
    flex: none;
}
.sb-track {
    flex: 1;
    width: 100%;
    padding: 144px 2px 4px;
}
.sb-thumb {
    height: 100%;
    background: #c1c1c1;
}

/* drupal admin toolbar */
.adminbar {
    height: 53px;
    flex: none;
    background: #0f0f0f;
    display: flex;
    font-family: "Liberation Sans", Arial, sans-serif;
    font-size: 17.600px;
    font-weight: 700;
    color: #fff;
}
.admin-item {
    display: flex;
    align-items: center;
}
.admin-ico {
    width: 20px;
    height: 20px;
    flex: none;
}
.admin-manage {
    width: 141px;
    padding-left: 12px;
    gap: 17px;
    background: linear-gradient(#555, #333);
}
.admin-shortcuts {
    padding-left: 12px;
    gap: 18px;
}
.admin-user {
    padding-left: 36px;
    gap: 17px;
}
.admin-edit {
    margin-left: auto;
    padding-right: 24px;
    gap: 18px;
}
.adminnav {
    height: 56px;
    flex: none;
    display: flex;
    background: #fff;
    border-bottom: 3px solid #bdbdbd;
    box-shadow: 0 1px 2px rgba(0, 0, 0, 0.15);
    font-family: "Liberation Sans", Arial, sans-serif;
    font-size: 17.600px;
    color: #565656;
}
.nav-item {
    display: flex;
    align-items: center;
    padding: 0 25px 0 12px;
    border-right: 1px solid #ddd;
}
.nav-item-ico {
    width: 20px;
    height: 20px;
    margin-right: 17px;
    flex: none;
}
.help-mark {
    font-size: 15px;
    font-weight: 700;
    fill: #fff;
    text-anchor: middle;
}
.nav-toggle {
    margin-left: auto;
    width: 39px;
    background: #f5f5f5;
    border-left: 1px solid #ccc;
    padding: 12px 0 0 10px;
}
.toggle-ico {
    width: 20px;
    height: 16px;
    display: block;
}

/* site */
.site {
    flex: 1;
    min-height: 0;
    display: flex;
    flex-direction: column;
    font-family: "Liberation Serif", "Times New Roman", serif;
    color: #000;
}
a {
    color: #0071b3;
    text-decoration: none;
    border-bottom: 1px dotted #0071b3;
}
.breadcrumb {
    margin: 8px 0 0 323px;
    height: 44px;
    font-size: 17.400px;
    line-height: 19px;
    color: #3b3b3b;
}
.columns {
    display: flex;
    padding-left: 323px;
    gap: 30px;
    flex: none;
}
.sidebar {
    width: 292px;
    flex: none;
    display: flex;
    flex-direction: column;
    gap: 20px;
}
.block {
    background: #f6f6f2;
    height: 99px;
    padding: 14px 21px 0;
}
.block-title {
    margin: 0;
    height: 29px;
    font-size: 19px;
    font-weight: 400;
    line-height: 26px;
    color: #3b3b3b;
    border-bottom: 1px solid #d6d6d6;
}
.search-row {
    display: flex;
    margin-top: 12px;
    gap: 5px;
}
.search-input {
    width: 145px;
    height: 29px;
    border: 1px solid #ccc;
    background: #fff;
    padding: 0;
}
.search-btn {
    width: 34px;
    height: 26px;
    border: 1px solid #ddd;
    border-radius: 13px;
    background: #eeeeee;
    display: flex;
    align-items: center;
    justify-content: center;
}
.block-link {
    margin: 15px 0 0 15px;
    font-size: 15.400px;
    line-height: 19px;
}
.content {
    width: 800px;
    flex: none;
}
.page-title {
    margin: 21px 0 0;
    font-size: 34.800px;
    font-weight: 400;
    line-height: 44px;
}
.where {
    margin: 16px 0 0;
    font-size: 18.200px;
    line-height: 22px;
}
.map {
    margin-top: 13px;
    width: 800px;
    height: 500px;
    position: relative;
    overflow: hidden;
    background: #dfdfdf;
}
.map-svg {
    display: block;
}

/* map drawing */
.commercial { fill: #efe6da; }
.pink { fill: #f5e6e6; }
.school { fill: #e5e6e0; }
.bldg { fill: #e9e9e9; }
.park { fill: #d8e9ba; }
.plant { fill: #f5eedd; stroke: #efe3c8; }
.water { fill: none; stroke: #a3ccff; stroke-width: 2; }
.rail { fill: none; stroke: #cecece; stroke-width: 1; }
.street path { fill: none; stroke: #fff; stroke-width: 3; }
.road path { fill: none; stroke: #fff; stroke-width: 7; }
.road .road-l { stroke-width: 11; }
.road .road-m { stroke-width: 8; }
.ramp { fill: none; stroke: #fde2bd; stroke-width: 4; }
.ramp-edge { fill: none; stroke: #f2c58c; stroke-width: 6; }
.hwy-edge { fill: #f3bd7a; }
.hwy { fill: #fdd295; }
.hwy-curve-edge { fill: none; stroke: #f3bd7a; stroke-width: 21; }
.hwy-curve { fill: none; stroke: #fdd295; stroke-width: 19; }
.hwy-split { fill: none; stroke: #e9b472; stroke-width: 1; }
.road-over { fill: none; stroke: #fff; stroke-width: 11; }
.road-over-thin { stroke-width: 8; }
.arr use { fill: #b9c4d4; }
.arr-dark use { fill: #a8a8a8; }
.lbl text {
    font-size: 13px;
    fill: #757575;
    stroke: #fff;
    stroke-width: 2.500px;
    stroke-opacity: .75;
    paint-order: stroke;
}
.lbl .mid { text-anchor: middle; }
.lbl .end { text-anchor: end; }
.sh-blue { fill: #3f77cc; stroke: #fff; stroke-width: 1; }
.sh-red { fill: #d9504a; }
.shield text {
    font-size: 11px;
    font-weight: 700;
    fill: #fff;
    text-anchor: middle;
}
.exit rect { fill: #67983e; stroke: #fff; stroke-width: 1; }
.exit text {
    font-size: 10px;
    fill: #fff;
    text-anchor: middle;
}
.poi {
    font-size: 14px;
    stroke: #fff;
    stroke-width: 2.500px;
    stroke-opacity: .8;
    paint-order: stroke;
}
.poi-end { text-anchor: end; }
.poi-blue { fill: #5b6bdb; }
.poi-brown { fill: #8d6e57; }
.poi-green { fill: #3f8a10; }
.pin-blue { fill: #6573de; stroke: #fff; }
.pin-brown { fill: #a5846c; stroke: #fff; }
.pin-green { fill: #6ea83a; stroke: #fff; }
.pin-white { fill: #fff; }
.pin-glyph {
    font-size: 13px;
    font-weight: 700;
    fill: #fff;
    text-anchor: middle;
}
.marker { fill: #ee5349; stroke: #c5352c; stroke-width: .600; }
.logo {
    font-family: "Open Sans", sans-serif;
    font-size: 19px;
    font-weight: 600;
    stroke: #fff;
    stroke-width: 1.500px;
    paint-order: stroke;
}

/* map controls */
.map-type {
    position: absolute;
    left: 10px;
    top: 10px;
    height: 29px;
    display: flex;
    background: #fff;
    border-radius: 2px;
    box-shadow: 0 1px 3px rgba(0, 0, 0, 0.25);
    font-family: Roboto, sans-serif;
    font-size: 11px;
    line-height: 29px;
}
.map-type-on {
    width: 37px;
    text-align: center;
    font-weight: 500;
    color: #000;
    border-right: 1px solid #e6e6e6;
}
.map-type-off {
    width: 59px;
    text-align: center;
    color: #565656;
}
.pegman {
    position: absolute;
    left: 762px;
    top: 383px;
    width: 28px;
    height: 28px;
    background: #fff;
    border-radius: 2px;
    box-shadow: 0 1px 3px rgba(0, 0, 0, 0.2);
    display: flex;
    align-items: center;
    justify-content: center;
}
.zoom-ctl {
    position: absolute;
    left: 762px;
    top: 421px;
    width: 28px;
    height: 55px;
    background: #fff;
    border-radius: 2px;
    box-shadow: 0 1px 3px rgba(0, 0, 0, 0.2);
    font-family: "Liberation Sans", sans-serif;
    font-size: 20px;
    font-weight: 700;
    color: #666;
    text-align: center;
}
.zoom-btn {
    height: 27px;
    line-height: 27px;
}
.zoom-sep {
    height: 1px;
    margin: 0 4px;
    background: #e6e6e6;
}
.attrib {
    position: absolute;
    right: 0;
    bottom: 0;
    width: 281px;
    height: 14px;
    display: flex;
    padding-left: 5px;
    background: rgba(245, 245, 245, 0.75);
    font-family: Roboto, sans-serif;
    font-size: 9.600px;
    line-height: 13px;
    color: #444;
    white-space: nowrap;
}
.attrib span {
    width: 121px;
    flex: none;
}
.attrib a {
    color: #444;
    border-bottom: 1px dotted #444;
    height: 13px;
}
.attrib a + a {
    margin-left: 12px;
}

/* footer */
.footer {
    margin-top: 40px;
    flex: 1;
    background: #292929;
    position: relative;
}
.footer-line {
    position: absolute;
    left: 323px;
    right: 322px;
    bottom: 3px;
    height: 1px;
    background: #444;
}

/* download shelf */
.downloads {
    height: 49px;
    flex: none;
    background: #dedede;
    border-bottom: 1px solid #aaa;
    display: flex;
    align-items: center;
    font-size: 15px;
    color: #333;
}
.dl {
    height: 36px;
    width: 227px;
    flex: none;
    display: flex;
    align-items: center;
    padding-left: 18px;
    border-right: 1px solid #bdbdbd;
}
.dl:first-child {
    width: 230px;
    padding-left: 20px;
}
.dl-ico {
    width: 16px;
    height: 16px;
    margin-right: 13px;
    flex: none;
}
.dl-name {
    width: 145px;
    flex: none;
    white-space: nowrap;
}
.dl-caret {
    width: 7px;
    height: 7px;
    margin: 4px 0 0 10px;
    border-left: 1.500px solid #555;
    border-top: 1.500px solid #555;
    transform: rotate(45deg);
}
.dl-right {
    margin-left: auto;
    display: flex;
    align-items: center;
}
.show-all {
    width: 83px;
    height: 27px;
    border: 1px solid #999;
    border-radius: 2px;
    background: #dcdcdc;
    font-size: 13px;
    line-height: 25px;
    text-align: center;
}
.dl-close {
    width: 37px;
    text-align: center;
    font-size: 12px;
    font-weight: 700;
    color: #555;
}

/* desktop panel */
.taskbar {
    height: 35px;
    flex: none;
    background: #efefef;
    display: flex;
    align-items: center;
    font-size: 13px;
    color: #333;
    position: relative;
}
.launchers {
    width: 190px;
    height: 35px;
    flex: none;
    display: flex;
    align-items: center;
    padding-left: 3px;
}
.launch-start {
    width: 27px;
    height: 32px;
}
.launch-dots {
    width: 30px;
    height: 12px;
    margin-left: 7px;
}
.launch-cube {
    width: 32px;
    height: 34px;
    margin-left: 5px;
}
.launch-eclipse {
    width: 34px;
    height: 32px;
    margin-left: 3px;
}
.launch-books {
    width: 31px;
    height: 34px;
    margin-left: 8px;
}
.task {
    display: flex;
    align-items: center;
    flex: none;
    white-space: nowrap;
}
.task-ico {
    width: 16px;
    height: 18px;
    margin-right: 4px;
    flex: none;
}
.task-ark {
    width: 254px;
    padding-left: 2px;
}
.task-calibre {
    width: 254px;
}
.task-chrome {
    width: 253px;
}
.task-konsole {
    width: 254px;
}
.task-nb {
    width: 235px;
}
.task-fade {
    display: block;
    width: 215px;
    overflow: hidden;
    -webkit-mask-image: linear-gradient(90deg, #000 85%, transparent);
    mask-image: linear-gradient(90deg, #000 85%, transparent);
}
.tray {
    position: absolute;
    right: 0;
    top: 0;
    bottom: 0;
    display: flex;
    align-items: center;
    gap: 8px;
    padding-right: 2px;
}
.tray-ico {
    width: 20px;
    height: 20px;
    flex: none;
}
.tray-balloon {
    width: 18px;
    height: 24px;
}
.tray-up {
    width: 6px;
    height: 6px;
    border-left: 1px solid #999;
    border-top: 1px solid #999;
    transform: rotate(45deg);
    margin: 3px 3px 0;
}
.clock {
    font-size: 13px;
    margin: 0 6px 0 4px;
}
.tray-corner {
    width: 14px;
    height: 35px;
    border: 1px solid #ccc;
    border-right: 0;
    border-radius: 14px 0 0 14px;
}
```
